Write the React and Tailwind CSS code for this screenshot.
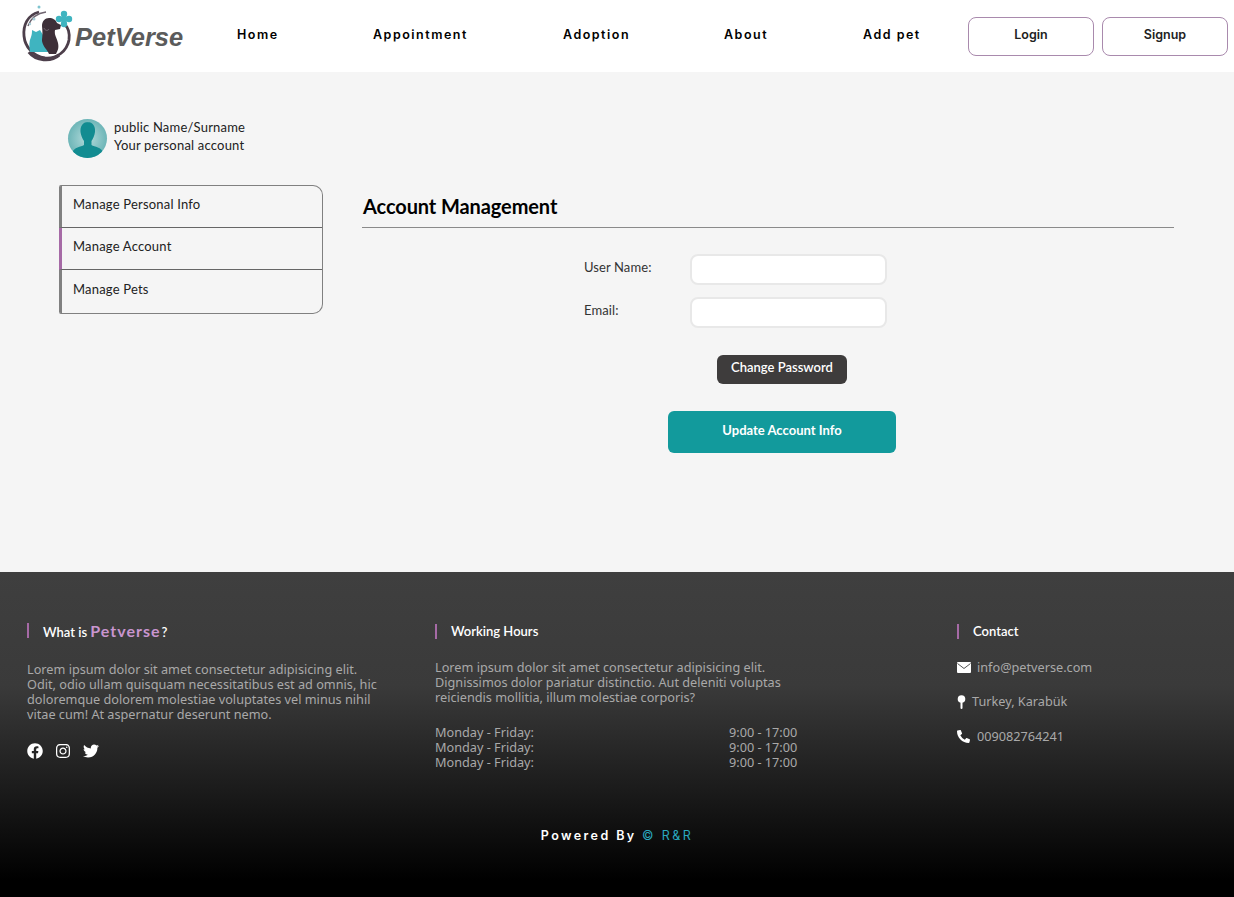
import { FaFacebook, FaInstagram, FaTwitter, FaPhoneAlt } from "react-icons/fa";

const NAV = [
  { label: "Home", w: "w-[136px]" },
  { label: "Appointment", w: "w-[190px]" },
  { label: "Adoption", w: "w-[161px]" },
  { label: "About", w: "w-[139px]" },
  { label: "Add pet", w: "w-[150px]" },
];

function Logo() {
  return (
    <svg width="62" height="66" viewBox="0 0 62 66" className="shrink-0">
      {/* ring */}
      <path d="M24 10C12 13 8 24 9 34c1 11 9 20 21 22 12 1 22-7 24-18 1-7-1-13-4-15" fill="none" stroke="#4d3f4b" strokeWidth="2.800" />
      <path d="M13 24c3-8 10-13 18-14" fill="none" stroke="#6f6570" strokeWidth="1.500" />
      <path d="M14 50c7 9 22 10 30 3" fill="none" stroke="#4d3f4b" strokeWidth="3.500" />
      {/* cat */}
      <path d="M15 50c-1-6-1-11 1-15 1-3 1-5 1-7l4 2 4-2 3 5 1 6c1 5 6 8 11 11z" fill="#3fb4c0" />
      {/* dog */}
      <path d="M27 24c0-5 3-8 7-8 4 0 7 2 8 5l4 2-1 4-5 1c-1 5 2 8 3 13 1 5 0 7-2 11h-7c-2-5-6-7-7-13 0-4 1-5 0-15z" fill="#3d2f38" />
      <path d="M29 26c1 3 4 3 5 1" fill="none" stroke="#8a7f88" strokeWidth="0.700" />
      {/* flower */}
      <circle cx="49" cy="12" r="3.200" fill="#3fb4c0" />
      <circle cx="54" cy="17" r="3.200" fill="#3fb4c0" />
      <circle cx="49" cy="22" r="3.200" fill="#3fb4c0" />
      <circle cx="44" cy="17" r="3.200" fill="#3fb4c0" />
      <circle cx="49" cy="17" r="3.500" fill="#3fb4c0" />
      {/* paws */}
      <circle cx="24" cy="5" r="1.500" fill="#7fc4cf" />
      <circle cx="19" cy="17" r="1.500" fill="#a9cfd8" />
      <circle cx="15" cy="22" r="1.200" fill="#a9cfd8" />
    </svg>
  );
}

function Avatar() {
  return (
    <div className="w-[39px] h-[39px] rounded-full overflow-hidden bg-[radial-gradient(circle,#b5dcdc,#4fa5a8)]">
      <svg width="39" height="39" viewBox="0 0 39 39">
        <path d="M19.500 3c5.500 0 8 4.500 7.500 10-.4 3.500-2 7-3.500 9v4c3 2 10 2 12 8v5H4v-5c2-6 9-6 12-8v-4c-1.500-2-3.100-5.500-3.500-9-.5-5.500 2-10 7.500-10z" fill="#128c91" />
      </svg>
    </div>
  );
}

function SideItem({ label, active, className }) {
  return (
    <div
      className={`flex items-center pl-[11px] pb-[3px] border-l-[3px] text-[13px] tracking-[0.2px] text-[#222] ${
        active ? "border-l-[#a66aa6]" : "border-l-[#808080]"
      } ${className}`}
    >
      {label}
    </div>
  );
}

function FooterTitle({ children }) {
  return (
    <div className="flex items-center gap-[14px] text-[13px] font-semibold text-white font-['Lato',sans-serif]">
      <span className="w-[2px] h-[15px] bg-[#a66aa6]" />
      <span>{children}</span>
    </div>
  );
}

export default function App() {
  return (
    <div className="w-[1234px] h-[897px] overflow-hidden bg-[#f5f5f5] font-['Lato',sans-serif]">
      <header className="h-[72px] bg-white flex items-center">
        <div className="w-[222px] pl-[15px] flex items-center pb-[2px]">
          <Logo />
          <span className="-ml-[2px] text-[25.500px] font-bold italic text-[#5b5b5b] font-['Liberation_Sans',sans-serif] pt-[4px]">
            PetVerse
          </span>
        </div>
        <nav className="flex items-center">
          {NAV.map((n) => (
            <div key={n.label} className={`${n.w} pb-[2px] pl-[15px] text-[12.500px] font-semibold text-black tracking-[1.5px] font-['Inter',sans-serif]`}>
              {n.label}
            </div>
          ))}
        </nav>
        <div className="flex gap-2 -ml-[30px] font-['Inter',sans-serif]">
          <button className="w-[126px] h-[39px] pb-[1px] bg-white border border-[#a98aad] rounded-lg text-[12.500px] font-semibold text-[#222]">Login</button>
          <button className="w-[126px] h-[39px] pb-[1px] bg-white border border-[#a98aad] rounded-lg text-[12.500px] font-semibold text-[#222]">Signup</button>
        </div>
      </header>

      <main className="h-[500px] flex pl-[59px] pr-[60px]">
        <aside className="w-[264px] shrink-0">
          <div className="flex items-center gap-[7px] pl-[9px] pt-[46px]">
            <Avatar />
            <div className="text-[13px] leading-[18px] tracking-[0.2px] text-[#222] pb-[5px]">
              <div>public Name/Surname</div>
              <div>Your personal account</div>
            </div>
          </div>
          <div className="mt-[26px] w-[264px] rounded-r-[10px] rounded-l-[2px] border border-l-0 border-[#808080] overflow-hidden">
            <SideItem label="Manage Personal Info" className="h-[42px] border-b border-b-[#666]" />
            <SideItem label="Manage Account" active className="h-[42px] border-b border-b-[#666]" />
            <SideItem label="Manage Pets" className="h-[43px]" />
          </div>
        </aside>

        <section className="flex-1 pl-[39px] pt-[119px]">
          <h1 className="h-[37px] text-[20px] font-bold tracking-[-0.1px] text-black pl-px border-b border-[#8a8a8a]">Account Management</h1>
          <form className="w-[313px] ml-[222px] mt-[26px]">
            <div className="flex items-center h-[31px]">
              <label className="w-[106px] pb-[4px] text-[13px] tracking-[0.1px] text-[#333]">User Name:</label>
              <input className="w-[197px] h-[31px] bg-white border-2 border-[#e8e8e8] rounded-lg" />
            </div>
            <div className="flex items-center h-[31px] mt-[12px]">
              <label className="w-[106px] pb-[4px] text-[13px] tracking-[0.1px] text-[#333]">Email:</label>
              <input className="w-[197px] h-[31px] bg-white border-2 border-[#e8e8e8] rounded-lg" />
            </div>
            <button type="button" className="block w-[130px] h-[29px] pb-[4px] mt-[27px] ml-[133px] bg-[#3e3c3c] rounded-md text-white text-[13px] font-semibold">
              Change Password
            </button>
            <button type="button" className="block w-[228px] h-[42px] pb-[3px] mt-[27px] ml-[84px] bg-[#129a9c] rounded-md text-white text-[13px] font-bold">
              Update Account Info
            </button>
          </form>
        </section>
      </main>

      <footer className="relative h-[325px] bg-[linear-gradient(#3f3f3f_0%,#3a3a3a_35%,#000_95%)] font-['Noto_Sans',sans-serif] text-[#a9a9a9] text-[12.700px]">
        <div className="flex pl-[27px] pt-[50px]">
          <div className="w-[408px]">
            <div className="-mt-[2px] h-[21px] flex items-center">
              <FooterTitle>
                What is <span className="text-[16px] font-bold tracking-[1px] text-[#c995cf]">Petverse</span>
                <span className="ml-[1px]">?</span>
              </FooterTitle>
            </div>
            <p className="mt-[21px] w-[350px] leading-[15px]">
              Lorem ipsum dolor sit amet consectetur adipisicing elit. Odit, odio ullam quisquam necessitatibus est ad omnis, hic doloremque dolorem molestiae voluptates vel minus nihil vitae cum! At aspernatur deserunt nemo.
            </p>
            <div className="flex items-center gap-[12px] mt-[21px] text-white">
              <FaFacebook size={16} />
              <FaInstagram size={16} />
              <FaTwitter size={16} />
            </div>
          </div>

          <div className="w-[522px]">
            <FooterTitle>Working Hours</FooterTitle>
            <p className="mt-[18px] w-[363px] leading-[15px]">
              Lorem ipsum dolor sit amet consectetur adipisicing elit. Dignissimos dolor pariatur distinctio. Aut deleniti voluptas reiciendis mollitia, illum molestiae corporis?
            </p>
            <div className="mt-[20px] leading-[15px]">
              {[0, 1, 2].map((i) => (
                <div key={i} className="flex">
                  <span className="w-[294px]">Monday - Friday:</span>
                  <span>9:00 - 17:00</span>
                </div>
              ))}
            </div>
          </div>

          <div>
            <FooterTitle>Contact</FooterTitle>
            <div className="flex items-center gap-[6px] mt-[17px] h-[18px]">
              <svg width="14" height="11" viewBox="0 0 14 11">
                <rect width="14" height="11" rx="1" fill="white" />
                <path d="M0.500 1.500L7 6.500l6.500-5" fill="none" stroke="#555" strokeWidth="1" />
              </svg>
              <span>info@petverse.com</span>
            </div>
            <div className="flex items-center gap-[6px] mt-[16px] h-[18px]">
              <svg width="9" height="14" viewBox="0 0 9 14" fill="white">
                <circle cx="4.500" cy="4" r="3.800" />
                <rect x="3.500" y="6" width="2" height="8" rx="1" />
              </svg>
              <span>Turkey, Karabük</span>
            </div>
            <div className="flex items-center gap-[7px] mt-[17px] h-[18px]">
              <FaPhoneAlt size={13} className="text-white" />
              <span>009082764241</span>
            </div>
          </div>
        </div>
        <div className="absolute left-0 right-0 top-[255px] text-center text-[12.500px] font-semibold tracking-[2.400px] text-white font-['Inter',sans-serif]">
          Powered By <span className="text-[#2aa9c0] font-normal">© R&amp;R</span>
        </div>
      </footer>
    </div>
  );
}
